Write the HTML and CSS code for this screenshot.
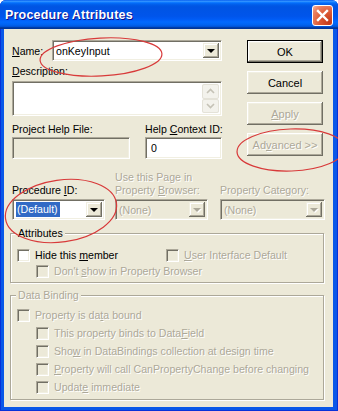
FILE: index.html
```html
<!DOCTYPE html>
<html lang="en">
<head>
    <meta charset="UTF-8">
    <title>Procedure Attributes</title>
    <link rel="stylesheet" href="styles.css">
</head>
<body>
    <div class="window">
        <div class="titlebar">
            <span class="title">Procedure Attributes</span>
            <span class="close">
                <svg width="13" height="13" viewBox="0 0 13 13"><path d="M2 2 L11 11 M11 2 L2 11" stroke="#fff" stroke-width="2.4" stroke-linecap="square"/></svg>
            </span>
        </div>

        <div class="client">
            <div class="top">
                <div class="fields">
                    <div class="name-row">
                        <label class="name-label"><u>N</u>ame:</label>
                        <div class="combo name-combo">
                            <span class="value">onKeyInput</span>
                            <span class="drop"><i class="arrow"></i></span>
                        </div>
                    </div>
                    <label class="lbl"><u>D</u>escription:</label>
                    <div class="textarea">
                        <div class="vscroll">
                            <span class="sbtn"><svg width="9" height="6" viewBox="0 0 9 6"><path d="M1 5 L4.5 1.5 L8 5" fill="none" stroke="#c5c2b6" stroke-width="1.6"/></svg></span>
                            <span class="sbtn"><svg width="9" height="6" viewBox="0 0 9 6"><path d="M1 1 L4.5 4.5 L8 1" fill="none" stroke="#c5c2b6" stroke-width="1.6"/></svg></span>
                        </div>
                    </div>
                    <div class="help-row">
                        <div class="help-file">
                            <label class="lbl">Project Help File:</label>
                            <div class="textbox off"></div>
                        </div>
                        <div class="help-id">
                            <label class="lbl">Help <u>C</u>ontext ID:</label>
                            <div class="textbox">0</div>
                        </div>
                    </div>
                </div>

                <div class="buttons">
                    <button type="button" class="btn default">OK</button>
                    <button type="button" class="btn">Cancel</button>
                    <button type="button" class="btn" disabled><u>A</u>pply</button>
                    <button type="button" class="btn" disabled>Ad<u>v</u>anced &gt;&gt;</button>
                </div>
            </div>

            <div class="ids">
                <label class="lbl">Procedure <u>I</u>D:</label>
                <label class="lbl gray">Use this Page in<br>Property <u>B</u>rowser:</label>
                <label class="lbl gray">Property Cate<u>g</u>ory:</label>

                <div class="combo small">
                    <span class="value"><span class="sel">(Default)</span></span>
                    <span class="drop"><i class="arrow"></i></span>
                </div>
                <div class="combo small off">
                    <span class="value">(None)</span>
                    <span class="drop"><i class="arrow"></i></span>
                </div>
                <div class="combo wide off">
                    <span class="value">(None)</span>
                    <span class="drop"><i class="arrow"></i></span>
                </div>
            </div>

            <fieldset class="group attrs">
                <legend>Attributes</legend>
                <div class="row">
                    <div class="check first"><span class="chk"></span><span>Hide this <u>m</u>ember</span></div>
                    <div class="check gray"><span class="chk off"></span><span><u>U</u>ser Interface Default</span></div>
                </div>
                <div class="row sub">
                    <div class="check gray"><span class="chk off"></span><span>Don't <u>s</u>how in Property Browser</span></div>
                </div>
            </fieldset>

            <fieldset class="group binding">
                <legend class="gray">Data Binding</legend>
                <div class="row">
                    <div class="check gray"><span class="chk off"></span><span>Property is da<u>t</u>a bound</span></div>
                </div>
                <div class="row sub">
                    <div class="check gray"><span class="chk off"></span><span>This property binds to Data<u>F</u>ield</span></div>
                </div>
                <div class="row sub">
                    <div class="check gray"><span class="chk off"></span><span>Sho<u>w</u> in DataBindings collection at design time</span></div>
                </div>
                <div class="row sub">
                    <div class="check gray"><span class="chk off"></span><span><u>P</u>roperty will call CanPropertyChange before changing</span></div>
                </div>
                <div class="row sub">
                    <div class="check gray"><span class="chk off"></span><span>Updat<u>e</u> immediate</span></div>
                </div>
            </fieldset>
        </div>

        <!-- red marks drawn over the screenshot -->
        <svg class="marks" width="338" height="411" viewBox="0 0 338 411">
            <ellipse cx="101" cy="57" rx="61" ry="19" transform="rotate(-3 101 57)"/>
            <ellipse cx="291" cy="150" rx="54" ry="21" transform="rotate(-2 291 150)"/>
            <ellipse cx="61" cy="211" rx="56" ry="31" transform="rotate(-8 61 211)"/>
        </svg>
    </div>
</body>
</html>
```

FILE: styles.css
```css
* {
    box-sizing: border-box;
}
body {
    margin: 0;
    background: #fff;
    font-family: "Liberation Sans", Arial, sans-serif;
    font-size: 10.6px;
    color: #000;
}
u {
    text-decoration: underline;
    text-underline-offset: 1px;
}

/* window frame */
.window {
    position: relative;
    width: 338px;
    height: 411px;
    display: flex;
    flex-direction: column;
    overflow: hidden;
    background: #0a58e8;
    border-radius: 6px 6px 0 0;
    box-shadow: inset 1px 0 #0831d9, inset -1px -1px #0831d9;
}
.titlebar {
    flex: none;
    height: 29px;
    display: flex;
    align-items: center;
    justify-content: space-between;
    padding: 0 5px 0 5px;
    background: linear-gradient(to bottom, #0058ee 0%, #3593ff 4%, #288eff 6%, #127dff 8%, #036ffc 10%, #0262ee 14%, #0057e5 20%, #0054e3 24%, #0055eb 56%, #005bf5 66%, #026afe 76%, #0062ef 86%, #0052d6 92%, #0040ab 94%, #003092 100%);
    border-radius: 6px 6px 0 0;
}
.title {
    color: #fff;
    font-family: "Liberation Sans", Arial, sans-serif;
    font-weight: bold;
    font-size: 12.5px;
    letter-spacing: 0.2px;
    text-shadow: 1px 1px #0f1089;
}
.close {
    width: 21px;
    height: 21px;
    margin-top: 1px;
    display: flex;
    align-items: center;
    justify-content: center;
    border: 1px solid #fff;
    border-radius: 3px;
    background: radial-gradient(circle at 85% 85%, #c2391b 0, #dd5a35 45%, #ec8566 80%, #f7b8a3 100%);
}
.client {
    flex: 1;
    margin: 0 5px 4px 4px;
    padding: 11px 0 0 8px;
    background: #ece9d8;
}

/* common labels */
.lbl {
    display: block;
    line-height: 13px;
    white-space: nowrap;
}
.gray,
.btn:disabled {
    color: #aca899;
    text-shadow: 1px 1px #fff;
}

/* top area */
.top {
    display: flex;
}
.fields {
    width: 210px;
}
.name-row {
    display: flex;
    align-items: center;
    height: 21px;
}
.name-label {
    width: 40px;
}
.name-combo {
    width: 170px;
}
.fields > .lbl {
    margin-top: 4px;
}
.textarea {
    position: relative;
    height: 35px;
    margin-top: 3px;
    background: #fff;
    border-top: 1px solid #aca899;
    border-left: 1px solid #aca899;
    border-bottom: 1px solid #fff;
    border-right: 1px solid #fff;
    box-shadow: inset 1px 1px #716f64, inset -1px -1px #f1efe2;
    display: flex;
    justify-content: flex-end;
    padding: 2px 2px 2px 2px;
}
.vscroll {
    width: 17px;
    display: flex;
    flex-direction: column;
    justify-content: space-between;
    background: #fbfaf6;
}
.sbtn {
    height: 15px;
    display: flex;
    align-items: center;
    justify-content: center;
    background: #f3f2ec;
    border: 1px solid #e4e2d8;
    border-radius: 2px;
}
.help-row {
    display: flex;
    margin-top: 7px;
}
.help-file {
    flex: none;
    width: 133px;
}
.help-file .textbox {
    width: 118px;
}
.help-id .textbox {
    width: 77px;
}
.textbox {
    height: 22px;
    margin-top: 1px;
    padding: 4px 0 0 5px;
    background: #fff;
    border-top: 1px solid #aca899;
    border-left: 1px solid #aca899;
    border-bottom: 1px solid #fff;
    border-right: 1px solid #fff;
    box-shadow: inset 1px 1px #716f64, inset -1px -1px #f1efe2;
}
.textbox.off {
    background: #ece9d8;
}

/* command buttons */
.buttons {
    width: 76px;
    margin-left: 25px;
    display: flex;
    flex-direction: column;
    gap: 8px;
}
.btn {
    height: 23px;
    padding: 0;
    font-family: inherit;
    font-size: 11px;
    color: #000;
    background: #ece9d8;
    border: none;
    box-shadow: inset -1px -1px #716f64, inset 1px 1px #fff, inset -2px -2px #aca899, inset 2px 2px #f1efe2;
}
.btn.default {
    border: 1px solid #000;
}

/* combo boxes */
.combo {
    display: flex;
    align-items: stretch;
    height: 21px;
    padding: 2px;
    background: #fff;
    border-top: 1px solid #aca899;
    border-left: 1px solid #aca899;
    border-bottom: 1px solid #fff;
    border-right: 1px solid #fff;
    box-shadow: inset 1px 1px #716f64, inset -1px -1px #f1efe2;
}
.combo .value {
    flex: 1;
    display: flex;
    align-items: center;
    padding-left: 1px;
}
.combo .drop {
    width: 16px;
    display: flex;
    align-items: center;
    justify-content: center;
    background: #ece9d8;
    box-shadow: inset -1px -1px #716f64, inset 1px 1px #f1efe2, inset -2px -2px #aca899, inset 2px 2px #fff;
}
.arrow {
    width: 0;
    height: 0;
    border-left: 4px solid transparent;
    border-right: 4px solid transparent;
    border-top: 4px solid #000;
}
.combo.off {
    background: #ece9d8;
}
.combo.off .value {
    color: #aca899;
    text-shadow: 1px 1px #fff;
}
.combo.off .arrow {
    border-top-color: #aca899;
    filter: drop-shadow(1px 1px #fff);
}
.sel {
    background: #316ac5;
    color: #fff;
    padding: 1px 2px 2px 1px;
}
.small {
    width: 93px;
}
.wide {
    width: 105px;
}

/* procedure id row */
.ids {
    display: grid;
    grid-template-columns: 103px 105px 105px;
    align-items: end;
    row-gap: 2px;
    margin-top: 12px;
}

/* group boxes */
.group {
    margin: 7px 9px 0 -2px;
    padding: 0 6px 3px 6px;
    min-inline-size: auto;
    border: 1px solid #aca899;
    box-shadow: inset 1px 1px #fff, 1px 1px #fff;
}
.group legend {
    padding: 0 2px;
    margin-left: -1px;
    line-height: 13px;
    background: #ece9d8;
}
.attrs .row:first-of-type {
    margin-top: 7px;
}
.binding {
    margin-top: 6px;
}
.binding .row:first-of-type {
    margin-top: 4px;
}
.binding .row {
    height: 18px;
}
.row {
    display: flex;
    align-items: center;
    height: 16px;
}
.row.sub {
    padding-left: 19px;
}
.check {
    display: flex;
    align-items: center;
    gap: 5px;
    white-space: nowrap;
}
.check.first {
    width: 149px;
}
.chk {
    flex: none;
    width: 13px;
    height: 13px;
    background: #fff;
    border-top: 1px solid #aca899;
    border-left: 1px solid #aca899;
    border-bottom: 1px solid #fff;
    border-right: 1px solid #fff;
    box-shadow: inset 1px 1px #716f64, inset -1px -1px #f1efe2;
}
.chk.off {
    background: #ece9d8;
}

/* annotation overlay */
.marks {
    position: absolute;
    left: 0;
    top: 0;
    pointer-events: none;
}
.marks ellipse {
    fill: none;
    stroke: #d83a3a;
    stroke-width: 1.2;
}
```
